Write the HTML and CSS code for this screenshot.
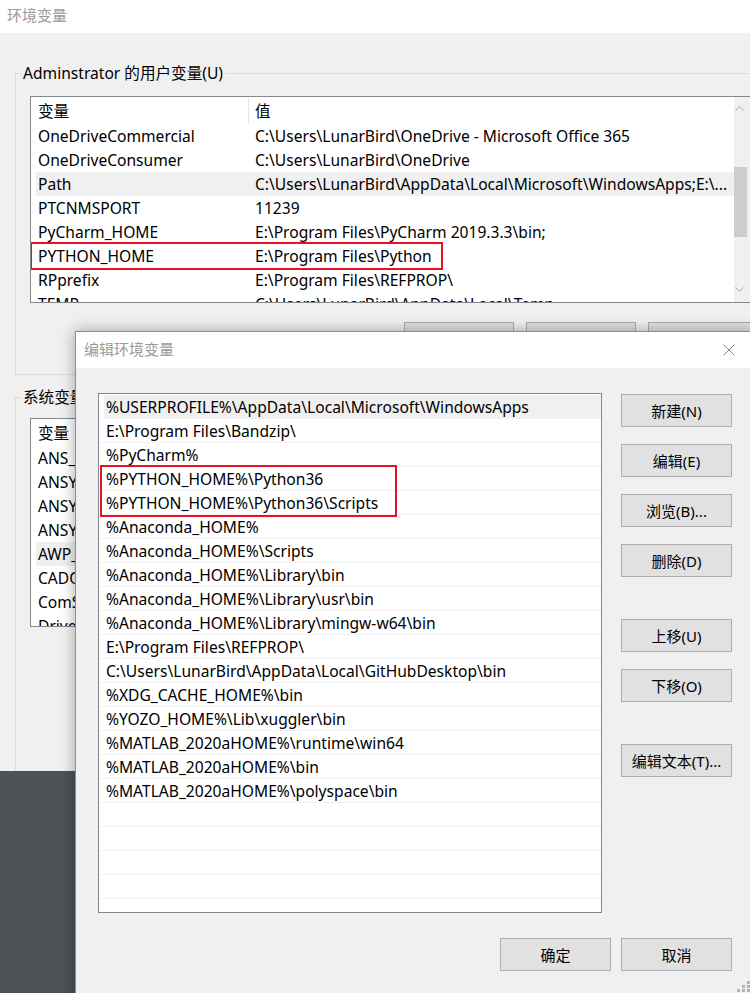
FILE: index.html
```html
<!DOCTYPE html>
<html lang="zh-CN">
<head>
<meta charset="utf-8">
<title>环境变量</title>
<link rel="stylesheet" href="styles.css">
</head>
<body>
<div class="bgwin">
  <div class="titlebar">环境变量</div>
  <div class="bgbody">
    <fieldset class="group group-user">
      <legend>Adminstrator 的用户变量(U)</legend>
      <div class="lv lv-user">
        <div class="lv-main">
          <div class="lv-head"><span class="c1">变量</span><span class="c2">值</span></div>
          <div class="lv-row"><span class="c1">OneDriveCommercial</span><span class="c2">C:\Users\LunarBird\OneDrive - Microsoft Office 365</span></div>
          <div class="lv-row"><span class="c1">OneDriveConsumer</span><span class="c2">C:\Users\LunarBird\OneDrive</span></div>
          <div class="lv-row sel"><span class="c1">Path</span><span class="c2">C:\Users\LunarBird\AppData\Local\Microsoft\WindowsApps;E:\...</span></div>
          <div class="lv-row"><span class="c1">PTCNMSPORT</span><span class="c2">11239</span></div>
          <div class="lv-row"><span class="c1">PyCharm_HOME</span><span class="c2">E:\Program Files\PyCharm 2019.3.3\bin;</span></div>
          <div class="lv-row"><span class="c1">PYTHON_HOME</span><span class="c2">E:\Program Files\Python</span></div>
          <div class="lv-row"><span class="c1">RPprefix</span><span class="c2">E:\Program Files\REFPROP\</span></div>
          <div class="lv-row"><span class="c1">TEMP</span><span class="c2">C:\Users\LunarBird\AppData\Local\Temp</span></div>
          <div class="redbox rb-user"></div>
        </div>
        <div class="vscroll">
          <svg class="arrow" width="9" height="5" viewBox="0 0 9 5"><path d="M0.5 4.5 L4.5 0.8 L8.5 4.5" fill="none" stroke="#a6a6a6" stroke-width="1"/></svg>
          <div class="track"><div class="thumb"></div></div>
          <svg class="arrow" width="9" height="5" viewBox="0 0 9 5"><path d="M0.5 0.5 L4.5 4.2 L8.5 0.5" fill="none" stroke="#a6a6a6" stroke-width="1"/></svg>
        </div>
      </div>
      <div class="btnrow">
        <button class="btn">新建(N)...</button>
        <button class="btn">编辑(E)...</button>
        <button class="btn">删除(D)</button>
      </div>
    </fieldset>
    <fieldset class="group group-sys">
      <legend>系统变量(S)</legend>
      <div class="lv lv-sys">
        <div class="lv-main">
          <div class="lv-head"><span class="c1">变量</span><span class="c2">值</span></div>
          <div class="lv-row"><span class="c1">ANS_FLAG</span></div>
          <div class="lv-row"><span class="c1">ANSYS_SYSDIR</span></div>
          <div class="lv-row"><span class="c1">ANSYS_SYSDIR32</span></div>
          <div class="lv-row"><span class="c1">ANSYS192_DIR</span></div>
          <div class="lv-row sel"><span class="c1">AWP_ROOT192</span></div>
          <div class="lv-row"><span class="c1">CADOE_LIBDIR</span></div>
          <div class="lv-row"><span class="c1">ComSpec</span></div>
          <div class="lv-row"><span class="c1">DriverData</span></div>
        </div>
      </div>
    </fieldset>
  </div>
</div>

<div class="dialog">
  <div class="dlg-title">
    <span class="dlg-caption">编辑环境变量</span>
    <svg class="close" width="12" height="12" viewBox="0 0 12 12"><path d="M0.5 0.5 L11.5 11.5 M11.5 0.5 L0.5 11.5" stroke="#8a8a8a" stroke-width="1" fill="none"/></svg>
  </div>
  <div class="dlg-body">
    <div class="dlg-main">
      <div class="plist">
        <div class="prow sel">%USERPROFILE%\AppData\Local\Microsoft\WindowsApps</div>
        <div class="prow">E:\Program Files\Bandzip\</div>
        <div class="prow">%PyCharm%</div>
        <div class="prow">%PYTHON_HOME%\Python36</div>
        <div class="prow">%PYTHON_HOME%\Python36\Scripts</div>
        <div class="prow">%Anaconda_HOME%</div>
        <div class="prow">%Anaconda_HOME%\Scripts</div>
        <div class="prow">%Anaconda_HOME%\Library\bin</div>
        <div class="prow">%Anaconda_HOME%\Library\usr\bin</div>
        <div class="prow">%Anaconda_HOME%\Library\mingw-w64\bin</div>
        <div class="prow">E:\Program Files\REFPROP\</div>
        <div class="prow">C:\Users\LunarBird\AppData\Local\GitHubDesktop\bin</div>
        <div class="prow">%XDG_CACHE_HOME%\bin</div>
        <div class="prow">%YOZO_HOME%\Lib\xuggler\bin</div>
        <div class="prow">%MATLAB_2020aHOME%\runtime\win64</div>
        <div class="prow">%MATLAB_2020aHOME%\bin</div>
        <div class="prow">%MATLAB_2020aHOME%\polyspace\bin</div>
        <div class="prow"></div>
        <div class="prow"></div>
        <div class="prow"></div>
        <div class="prow"></div>
        <div class="prow"></div>
        <div class="prow"></div>
        <div class="redbox rb-path"></div>
      </div>
      <div class="btncol">
        <button class="btn">新建(N)</button>
        <button class="btn">编辑(E)</button>
        <button class="btn">浏览(B)...</button>
        <button class="btn">删除(D)</button>
        <button class="btn gap">上移(U)</button>
        <button class="btn">下移(O)</button>
        <button class="btn gap">编辑文本(T)...</button>
      </div>
    </div>
    <div class="dlg-foot">
      <button class="btn">确定</button>
      <button class="btn">取消</button>
    </div>
  </div>
  <svg class="grip" width="14" height="12" viewBox="0 0 14 12">
    <rect x="10" y="0" width="3" height="3" fill="#b4b4b4"/>
    <rect x="5" y="4" width="3" height="3" fill="#b4b4b4"/>
    <rect x="10" y="4" width="3" height="3" fill="#b4b4b4"/>
    <rect x="0" y="8" width="3" height="3" fill="#b4b4b4"/>
    <rect x="5" y="8" width="3" height="3" fill="#b4b4b4"/>
    <rect x="10" y="8" width="3" height="3" fill="#b4b4b4"/>
  </svg>
</div>
</body>
</html>
```

FILE: styles.css
```css
* { box-sizing: border-box; }
html, body { margin: 0; padding: 0; }
body {
  width: 750px;
  height: 993px;
  overflow: hidden;
  position: relative;
  background: #4d5257;
  font-family: "Noto Sans", "Noto Sans CJK SC", sans-serif;
  font-size: 15.6px;
  color: #000;
}

/* background window */
.bgwin {
  width: 770px;
  height: 771px;
  background: #f0f0f0;
  overflow: hidden;
}
.titlebar {
  height: 33px;
  background: #fff;
  color: #9a9a9a;
  padding-left: 7px;
  line-height: 30px;
  font-size: 15px;
}
.bgbody { padding-left: 15px; }

.group {
  margin: 0;
  padding: 0;
  border: 1px solid #dcdcdc;
  min-width: 0;
}
.group legend {
  margin-left: 5px;
  padding: 0 2px;
  line-height: 20px;
  height: 20px;
}
.group-user { margin-top: 30px; padding-bottom: 19px; }
.group-sys { margin-top: 12px; height: 400px; }

.lv {
  margin-left: 14px;
  border: 1px solid #828790;
  background: #fff;
  display: flex;
  overflow: hidden;
}
.lv-user { margin-top: 13px; height: 207px; width: 722px; }
.lv-sys { margin-top: 11px; height: 209px; width: 400px; }
.lv-main { flex: 1; position: relative; min-width: 0; }
.lv-head {
  height: 27px;
  display: flex;
  align-items: center;
  padding-left: 7px;
}
.lv-head .c1 { width: 210px; }
.lv-head .c2 {
  border-left: 1px solid #e5e5e5;
  padding-left: 6px;
  height: 26px;
  line-height: 26px;
}
.lv-row {
  height: 24px;
  line-height: 24px;
  display: flex;
  margin-left: 5px;
  padding-left: 2px;
  white-space: nowrap;
}
.lv-row.sel { background: #f0f0f0; }
.lv-row .c1 { width: 217px; flex: none; }

.vscroll {
  width: 17px;
  flex: none;
  background: #f0f0f0;
  display: flex;
  flex-direction: column;
  align-items: flex-start;
}
.vscroll .arrow { margin: 9px 0 0 1px; flex: none; }
.vscroll .track { flex: 1; width: 100%; padding-top: 56px; }
.vscroll .track + .arrow { margin: 0 0 10px 1px; }
.thumb { width: 13px; height: 70px; background: #cdcdcd; }

.btnrow {
  margin-top: 19px;
  margin-left: 388px;
  display: flex;
  gap: 12px;
}
.btnrow .btn { width: 110px; flex: none; }

.btn {
  height: 33px;
  background: #e1e1e1;
  border: 1px solid #adadad;
  font-family: inherit;
  font-size: 15px;
  color: #000;
  padding: 0;
  margin: 0;
}

.redbox {
  position: absolute;
  border: 2px solid #e81123;
  pointer-events: none;
}
.rb-user { left: -1px; top: 145px; width: 413px; height: 28px; }

/* dialog */
.dialog {
  position: absolute;
  left: 75px;
  top: 331px;
  width: 680px;
  height: 680px;
  border: 1px solid #8c8c8c;
  background: #f0f0f0;
  box-shadow: 0 0 14px rgba(0,0,0,0.35);
}
.dlg-title {
  height: 36px;
  background: #fff;
  display: flex;
  align-items: center;
  justify-content: space-between;
  padding: 0 19px 3px 8px;
}
.dlg-caption { color: #9a9a9a; font-size: 15px; }
.close { margin-top: 3px; }
.dlg-body { padding: 25px 22px 0 22px; }
.dlg-main { display: flex; gap: 19px; }
.plist {
  position: relative;
  width: 504px;
  height: 520px;
  border: 1px solid #828790;
  background: #fff;
  padding-top: 1px;
  overflow: hidden;
  flex: none;
}
.prow {
  height: 24px;
  line-height: 24px;
  border-bottom: 1px solid #f0f0f0;
  padding-left: 7px;
  white-space: nowrap;
}
.prow.sel { background: #f0f0f0; margin-left: 5px; padding-left: 2px; }
.rb-path { left: 1px; top: 71px; width: 297px; height: 52px; }

.btncol {
  display: flex;
  flex-direction: column;
  gap: 17px;
  padding-top: 1px;
  width: 111px;
}
.btncol .gap { margin-top: 25px; }
.dlg-foot {
  margin-top: 25px;
  display: flex;
  justify-content: flex-end;
  gap: 10px;
}
.dlg-foot .btn { width: 111px; }
.grip { position: absolute; left: 661px; top: 649px; }
```
